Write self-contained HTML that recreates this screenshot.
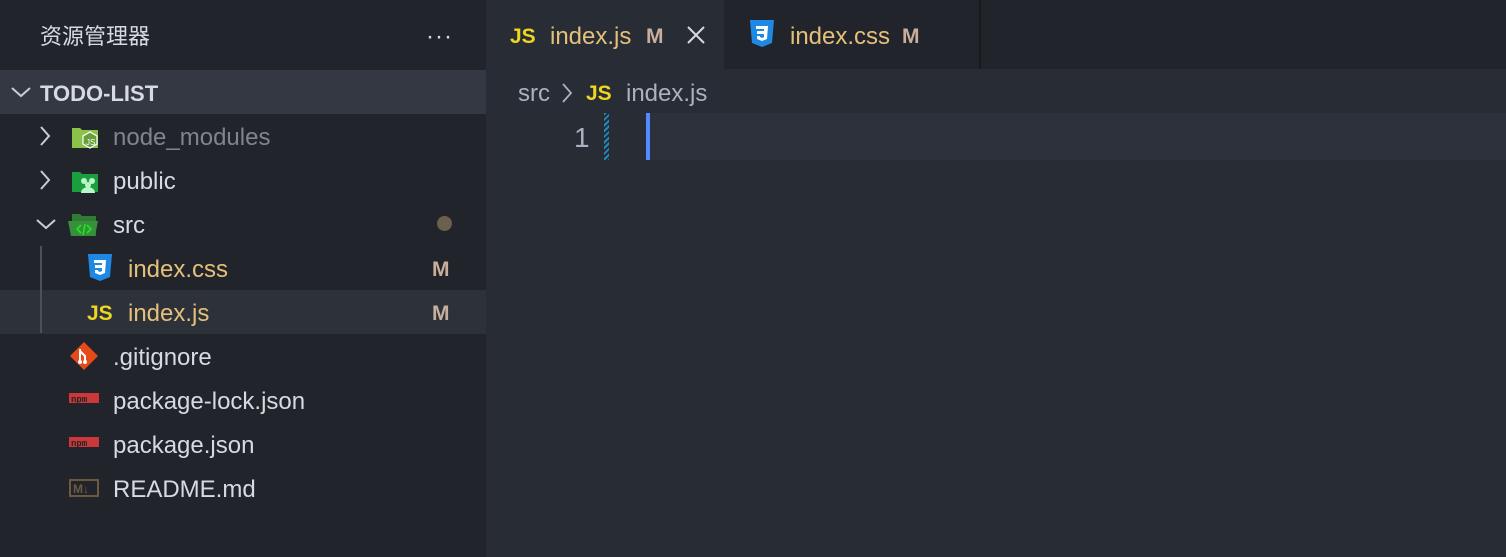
<!DOCTYPE html>
<html><head><meta charset="utf-8"><style>
*{margin:0;padding:0;box-sizing:border-box}
body{width:1506px;height:557px;overflow:hidden;background:#282c34;font-family:"Liberation Sans","Noto Sans CJK SC",sans-serif;position:relative;color:#abb2bf}
.side{position:absolute;left:0;top:0;width:486px;height:557px;background:#21252b}
.t{position:absolute;white-space:nowrap;font-size:24px;line-height:44px;margin-top:2px}
.row{position:absolute;left:0;width:486px;height:44px}
.ic{position:absolute}
</style></head><body>
<div class="side">
 <div class="t" style="left:40px;top:13px;font-size:22px;color:#d7dae0">资源管理器</div>
 <div class="t" style="left:426px;top:13px;font-size:24px;color:#d7dae0;letter-spacing:1px">···</div>
 <div class="row" style="top:70px;background:#333842"></div>
 <svg class="ic" style="left:10px;top:83px" width="22" height="18"><path d="M2 5 L11 13 L20 5" stroke="#c8ccd4" stroke-width="2" fill="none"/></svg>
 <div class="t" style="left:40px;top:70px;font-weight:bold;font-size:22px;color:#d7dae0">TODO-LIST</div>
 <div class="row" style="top:290px;background:#2c313a"></div>
 <div style="position:absolute;left:40px;top:246px;width:2px;height:87px;background:#4b5059"></div>
 <svg class="ic" style="left:38px;top:125px" width="14" height="22"><path d="M3 2 L11 11 L3 20" stroke="#c8ccd4" stroke-width="2" fill="none"/></svg>
 <svg class="ic" style="left:38px;top:169px" width="14" height="22"><path d="M3 2 L11 11 L3 20" stroke="#c8ccd4" stroke-width="2" fill="none"/></svg>
 <svg class="ic" style="left:35px;top:215px" width="22" height="18"><path d="M2 5 L11 13 L20 5" stroke="#c8ccd4" stroke-width="2" fill="none"/></svg>
 <svg class="ic" style="left:72px;top:124px" width="28" height="26"><path d="M0 4h8l2 2h16v18H0z" fill="#8bc34a"/><path d="M18 8l7 4v8l-7 4l-7-4v-8z" fill="#689f38" stroke="#fff" stroke-width="1.2"/><text x="14" y="21" font-size="8" fill="#fff" font-family="Liberation Sans">JS</text></svg>
 <div class="t" style="left:113px;top:114px;color:#7f848e">node_modules</div>
 <svg class="ic" style="left:72px;top:168px" width="28" height="26"><path d="M0 4h8l2 2h16v18H0z" fill="#1b9e3e"/><circle cx="12" cy="13" r="3" fill="#b9f6ca"/><circle cx="20" cy="13" r="3" fill="#b9f6ca"/><circle cx="16" cy="17" r="3" fill="#b9f6ca"/><path d="M9 25a7 6 0 0 1 14 0z" fill="#b9f6ca"/></svg>
 <div class="t" style="left:113px;top:158px;color:#d7dae0">public</div>
 <svg class="ic" style="left:68px;top:212px" width="32" height="26"><path d="M4 2h8l2 2h14v20H4z" fill="#2e7d32"/><path d="M0 9h30l-3 15H3z" fill="#388e3c"/><path d="M13 13l-4 4l4 4M19 13l4 4l-4 4M17 12l-2 11" stroke="#1de91d" stroke-width="1.6" fill="none"/></svg>
 <div class="t" style="left:113px;top:202px;color:#d7dae0">src</div>
 <div style="position:absolute;left:437px;top:216px;width:15px;height:15px;border-radius:50%;background:#6b5f4e"></div>
 <svg class="ic" style="left:88px;top:254px" width="24" height="28"><path d="M0 0h24l-2 23l-10 4l-10-4z" fill="#1e88e5"/><path d="M6 6h12l-1 13l-5 2l-5-2v-3h3v1l2 1l2-1v-3h-7v-3h7v-2h-8z" fill="#fff"/></svg>
 <div class="t" style="left:128px;top:246px;color:#e5c07b">index.css</div>
 <div class="t" style="left:432px;top:246px;color:#c8ae9d;font-weight:bold;font-size:21px">M</div>
 <div class="t" style="left:87px;top:290px;color:#f0d520;font-weight:bold;font-size:21px">JS</div>
 <div class="t" style="left:128px;top:290px;color:#e5c07b">index.js</div>
 <div class="t" style="left:432px;top:290px;color:#c8ae9d;font-weight:bold;font-size:21px">M</div>
 <svg class="ic" style="left:70px;top:342px" width="28" height="28"><path d="M14 0L28 14L14 28L0 14z" fill="#e64a19"/><path d="M10 7v13M10 9l5 5v7" stroke="#fff" stroke-width="2" fill="none"/><circle cx="10" cy="20" r="2" fill="#fff"/><circle cx="15" cy="20" r="2" fill="#fff"/></svg>
 <div class="t" style="left:113px;top:334px;color:#d7dae0">.gitignore</div>
 <svg class="ic" style="left:69px;top:393px" width="30" height="12"><rect width="30" height="10" fill="#cb3837"/><text x="2" y="9" font-size="9" font-weight="bold" fill="#21252b" font-family="Liberation Mono">npm</text></svg>
 <div class="t" style="left:113px;top:378px;color:#d7dae0">package-lock.json</div>
 <svg class="ic" style="left:69px;top:437px" width="30" height="12"><rect width="30" height="10" fill="#cb3837"/><text x="2" y="9" font-size="9" font-weight="bold" fill="#21252b" font-family="Liberation Mono">npm</text></svg>
 <div class="t" style="left:113px;top:422px;color:#d7dae0">package.json</div>
 <svg class="ic" style="left:69px;top:479px" width="30" height="18"><rect x="1" y="1" width="28" height="16" fill="none" stroke="#6d5a3e" stroke-width="2"/><text x="4" y="14" font-size="12" font-weight="bold" fill="#6d5a3e" font-family="Liberation Sans">M↓</text></svg>
 <div class="t" style="left:113px;top:466px;color:#d7dae0">README.md</div>
</div>
<div style="position:absolute;left:486px;top:0;width:1020px;height:69px;background:#21252b"></div>
<div style="position:absolute;left:486px;top:0;width:238px;height:69px;background:#282c34"></div>
<div style="position:absolute;left:979px;top:0;width:2px;height:69px;background:#181a1f"></div>
<div class="t" style="left:510px;top:13px;color:#f0d520;font-weight:bold;font-size:21px">JS</div>
<div class="t" style="left:550px;top:13px;color:#e5c07b">index.js</div>
<div class="t" style="left:646px;top:13px;color:#c8ae9d;font-weight:bold;font-size:21px">M</div>
<svg class="ic" style="left:686px;top:25px" width="20" height="20"><path d="M2 2L18 18M18 2L2 18" stroke="#d7dae0" stroke-width="2"/></svg>
<svg class="ic" style="left:750px;top:20px" width="24" height="28"><path d="M0 0h24l-2 23l-10 4l-10-4z" fill="#1e88e5"/><path d="M6 6h12l-1 13l-5 2l-5-2v-3h3v1l2 1l2-1v-3h-7v-3h7v-2h-8z" fill="#fff"/></svg>
<div class="t" style="left:790px;top:13px;color:#e5c07b">index.css</div>
<div class="t" style="left:902px;top:13px;color:#c8ae9d;font-weight:bold;font-size:21px">M</div>
<div class="t" style="left:518px;top:70px;color:#abb2bf">src</div>
<svg class="ic" style="left:560px;top:82px" width="14" height="22"><path d="M3 2L11 11L3 20" stroke="#abb2bf" stroke-width="1.8" fill="none"/></svg>
<div class="t" style="left:586px;top:70px;color:#f0d520;font-weight:bold;font-size:21px">JS</div>
<div class="t" style="left:626px;top:70px;color:#abb2bf">index.js</div>
<div style="position:absolute;left:650px;top:113px;width:856px;height:47px;background:#2c313c"></div>
<div style="position:absolute;left:646px;top:113px;width:4px;height:47px;background:#528bff"></div>
<div style="position:absolute;left:604px;top:113px;width:5px;height:47px;background:repeating-linear-gradient(135deg,#1f8ac0 0 2px,transparent 2px 4px)"></div>
<div class="t" style="left:574px;top:114px;color:#aab1c0;font-size:28px">1</div>
</body></html>
